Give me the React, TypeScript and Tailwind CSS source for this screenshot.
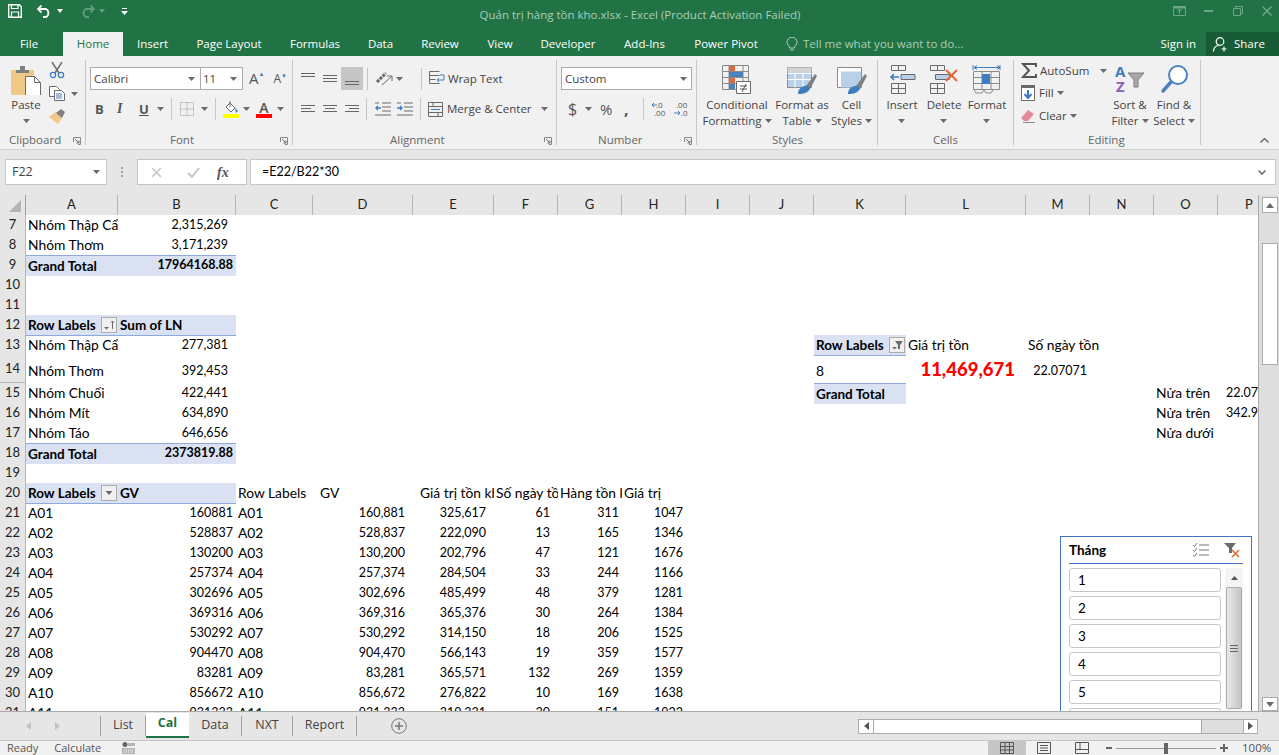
import type { ReactNode } from "react";

const rowGrid =
  "grid grid-cols-[26px_92px_118px_77px_100px_81px_64px_64px_64px_64px_64px_92px_120px_64px_64px_64px_40px]";

type Kind = "l" | "l7" | "p" | "r" | "a" | "head" | "total" | "totalr" | "big";
type Cell = { c: number; t: string; k?: Kind; btn?: "sort" | "drop" | "filter"; spill?: boolean };
type Row = { n: number; tall?: boolean; cells: Cell[] };

const kindClass: Record<Kind, string> = {
  l: "pl-[2px] text-left text-[13.8px]",
  l7: "pl-[7px] text-left text-[13.8px]",
  p: "pl-[8px] text-left text-[12.5px]",
  r: "pr-[3px] text-right text-[12.5px]",
  a: "pr-[8px] text-right text-[12.5px]",
  head: "pl-[2px] text-left font-bold bg-[#d9e1f2] border-b border-[#8ea9db]",
  total: "pl-[2px] text-left font-bold bg-[#d9e1f2] border-t border-[#8ea9db]",
  totalr: "pr-[3px] text-right font-bold text-[12.5px] bg-[#d9e1f2] border-t border-[#8ea9db]",
  big: "pr-[11px] pb-[3px] text-right font-black text-[#ff0000] text-[18.5px]",
};

const gv: [string, string, string, string, string, string, string][] = [
  ["A01", "160881", "160,881", "325,617", "61", "311", "1047"],
  ["A02", "528837", "528,837", "222,090", "13", "165", "1346"],
  ["A03", "130200", "130,200", "202,796", "47", "121", "1676"],
  ["A04", "257374", "257,374", "284,504", "33", "244", "1166"],
  ["A05", "302696", "302,696", "485,499", "48", "379", "1281"],
  ["A06", "369316", "369,316", "365,376", "30", "264", "1384"],
  ["A07", "530292", "530,292", "314,150", "18", "206", "1525"],
  ["A08", "904470", "904,470", "566,143", "19", "359", "1577"],
  ["A09", "83281", "83,281", "365,571", "132", "269", "1359"],
  ["A10", "856672", "856,672", "276,822", "10", "169", "1638"],
  ["A11", "931333", "931,333", "319,331", "30", "151", "1922"],
];

const lnRow = (n: number, name: string, val: string, extra: Cell[] = [], tall = false): Row => ({
  n,
  tall,
  cells: [{ c: 1, t: name, k: "l" }, { c: 2, t: val, k: "a" }, ...extra],
});

const rows: Row[] = [
  lnRow(7, "Nhóm Thập Cẩm", "2,315,269"),
  lnRow(8, "Nhóm Thơm", "3,171,239"),
  { n: 9, cells: [{ c: 1, t: "Grand Total", k: "total" }, { c: 2, t: "17964168.88", k: "totalr" }] },
  { n: 10, cells: [] },
  { n: 11, cells: [] },
  { n: 12, cells: [{ c: 1, t: "Row Labels", k: "head", btn: "sort" }, { c: 2, t: "Sum of LN", k: "head" }] },
  lnRow(13, "Nhóm Thập Cẩm", "277,381", [
    { c: 11, t: "Row Labels", k: "head", btn: "filter" },
    { c: 12, t: "Giá trị tồn", k: "l" },
    { c: 13, t: "Số ngày tồn", k: "l", spill: true },
  ]),
  lnRow(
    14,
    "Nhóm Thơm",
    "392,453",
    [
      { c: 11, t: "8", k: "l" },
      { c: 12, t: "11,469,671", k: "big" },
      { c: 13, t: "22.07071", k: "r" },
    ],
    true,
  ),
  lnRow(15, "Nhóm Chuối", "422,441", [
    { c: 11, t: "Grand Total", k: "total" },
    { c: 15, t: "Nửa trên", k: "l" },
    { c: 16, t: "22.07071", k: "p" },
  ]),
  lnRow(16, "Nhóm Mít", "634,890", [
    { c: 15, t: "Nửa trên", k: "l" },
    { c: 16, t: "342.9071", k: "p" },
  ]),
  lnRow(17, "Nhóm Táo", "646,656", [{ c: 15, t: "Nửa dưới", k: "l" }]),
  { n: 18, cells: [{ c: 1, t: "Grand Total", k: "total" }, { c: 2, t: "2373819.88", k: "totalr" }] },
  { n: 19, cells: [] },
  {
    n: 20,
    cells: [
      { c: 1, t: "Row Labels", k: "head", btn: "drop" },
      { c: 2, t: "GV", k: "head" },
      { c: 3, t: "Row Labels", k: "l" },
      { c: 4, t: "GV", k: "l7" },
      { c: 5, t: "Giá trị tồn kho", k: "l7" },
      { c: 6, t: "Số ngày tồn", k: "l" },
      { c: 7, t: "Hàng tồn kho", k: "l" },
      { c: 8, t: "Giá trị", k: "l" },
    ],
  },
  ...gv.map((g, i) => ({
    n: 21 + i,
    cells: [
      { c: 1, t: g[0], k: "l" as Kind },
      { c: 2, t: g[1], k: "r" as Kind },
      { c: 3, t: g[0], k: "l" as Kind },
      { c: 4, t: g[2], k: "a" as Kind },
      { c: 5, t: g[3], k: "a" as Kind },
      { c: 6, t: g[4], k: "a" as Kind },
      { c: 7, t: g[5], k: "r" as Kind },
      { c: 8, t: g[6], k: "r" as Kind },
    ],
  })),
];

const columns = ["A", "B", "C", "D", "E", "F", "G", "H", "I", "J", "K", "L", "M", "N", "O", "P"];
const tabs = [
  ["Insert", "w-[59px]"],
  ["Page Layout", "w-[94px]"],
  ["Formulas", "w-[78px]"],
  ["Data", "w-[53px]"],
  ["Review", "w-[66px]"],
  ["View", "w-[54px]"],
  ["Developer", "w-[82px]"],
  ["Add-Ins", "w-[71px]"],
  ["Power Pivot", "w-[92px]"],
];

function Caret({ className = "" }: { className?: string }) {
  return (
    <svg width="7" height="4" viewBox="0 0 7 4" className={`shrink-0 ${className}`}>
      <path d="M0 0h7L3.5 4z" fill="#6a6a6a" />
    </svg>
  );
}

function Launcher() {
  return (
    <svg width="8" height="8" viewBox="0 0 8 8" className="shrink-0">
      <path d="M.5 5V.5H7.5V7.5H5" fill="none" stroke="#8a8a8a" />
      <path d="M2 2l4 4M6 3.5V6H3.5" fill="none" stroke="#6a6a6a" />
    </svg>
  );
}

function Group({
  label,
  width,
  labelClass,
  children,
}: {
  label: string;
  width: string;
  labelClass: string;
  children: ReactNode;
}) {
  return (
    <div className={`relative flex h-[85px] flex-col border-r border-[#c6c6c6] ${width}`}>
      <div className="h-[74px] shrink-0">{children}</div>
      <div className={`flex h-[12px] shrink-0 items-center text-[11.5px] leading-none text-[#666666] ${labelClass}`}>
        {label}
      </div>
    </div>
  );
}

function AlignLines({ rows, className = "" }: { rows: [number, number, number][]; className?: string }) {
  return (
    <svg width="14" height="14" viewBox="0 0 14 14" className={`shrink-0 ${className}`}>
      {rows.map(([x, y, w]) => (
        <path key={y} d={`M${x} ${y + 0.5}h${w}`} stroke="#666666" />
      ))}
    </svg>
  );
}

function Sep({ className = "" }: { className?: string }) {
  return <div className={`h-[22px] w-px shrink-0 bg-[#c6c6c6] ${className}`} />;
}

function BigLabel({ one, two, caret = true }: { one: string; two?: string; caret?: boolean }) {
  return (
    <div className="flex flex-col items-center whitespace-nowrap text-[11.5px] leading-[16px] text-[#444444]">
      <span>{one}</span>
      <span className="flex items-center gap-[3px]">
        {two}
        {caret && <Caret className={two ? "" : "mt-[6px]"} />}
      </span>
    </div>
  );
}

function Clipboard() {
  return (
    <Group label="Clipboard" width="w-[86px]" labelClass="pl-[9px] gap-[14px]">
      <div className="flex pt-[4px]">
        <div className="ml-[7px] flex w-[38px] flex-col items-center">
          <svg width="32" height="31" viewBox="0 0 32 31">
            <path d="M1 6h23v26H1z" fill="#f0c987" />
            <path d="M6 6h13v3H6zM10 2h5v4h-5z" fill="#7f7f7f" />
            <path d="M15.5 12.5h9l6 6v13h-15z" fill="#ffffff" stroke="#6a6a6a" />
            <path d="M24.5 12.5v6h6" fill="none" stroke="#6a6a6a" />
          </svg>
          <span className="mt-[2px] text-[11.5px] leading-[16px] text-[#444444]">Paste</span>
          <Caret className="mt-[6px]" />
        </div>
        <div className="ml-[4px] flex flex-col">
          <svg width="16" height="17" viewBox="0 0 16 17" className="-mt-[2px]">
            <path d="M3 0l7 11M13 0L6 11" stroke="#6a6a6a" strokeWidth="1.4" />
            <circle cx="4" cy="13" r="2.6" fill="none" stroke="#3f7cbf" strokeWidth="1.3" />
            <circle cx="12" cy="13" r="2.6" fill="none" stroke="#3f7cbf" strokeWidth="1.3" />
          </svg>
          <div className="mt-[7px] flex items-center gap-[6px]">
            <svg width="16" height="15" viewBox="0 0 16 15">
              <path d="M.5.5h7l3 3v7H.5z" fill="#ffffff" stroke="#6a6a6a" />
              <path d="M5.5 4.5h7l3 3v7h-10z" fill="#ffffff" stroke="#6a6a6a" />
              <path d="M7 8h6M7 10h6M7 12h6" stroke="#3f7cbf" />
            </svg>
            <Caret />
          </div>
          <svg width="17" height="16" viewBox="0 0 17 16" className="mt-[7px]">
            <path d="M0 9l7-5 6 6-4 6z" fill="#f0c987" />
            <path d="M7 5l5-4 4 3-3 6z" fill="#7f7f7f" />
          </svg>
        </div>
      </div>
      <div className="absolute bottom-[0px] right-[4px]">
        <Launcher />
      </div>
    </Group>
  );
}

function FontGroup() {
  return (
    <Group label="Font" width="w-[207px]" labelClass="pl-[84px]">
      <div className="mt-[7px] flex h-[23px] items-center pl-[4px]">
        <div className="flex h-[23px] w-[111px] items-center justify-between border border-[#ababab] bg-white pl-[3px] pr-[5px] text-[11.5px] text-[#444444]">
          Calibri
          <Caret />
        </div>
        <div className="flex h-[23px] w-[42px] items-center justify-between border border-l-0 border-[#ababab] bg-white pl-[2px] pr-[5px] text-[11.5px] text-[#444444]">
          11
          <Caret />
        </div>
        <span className="ml-[6px] flex items-start text-[15px] leading-none text-[#555555]">
          A<span className="text-[6px] leading-none text-[#3f7cbf]">▲</span>
        </span>
        <span className="ml-[9px] flex items-start text-[12px] leading-none text-[#555555]">
          A<span className="text-[6px] leading-none text-[#3f7cbf]">▼</span>
        </span>
      </div>
      <div className="mt-[8px] flex h-[22px] items-center pl-[9px]">
        <span className="w-[22px] text-[13px] font-bold leading-none text-[#555555]">B</span>
        <span className="w-[22px] font-['Liberation_Serif',serif] text-[14px] font-bold italic leading-none text-[#555555]">I</span>
        <span className="w-[17px] text-[13px] font-bold leading-none text-[#555555] underline">U</span>
        <Caret className="ml-[1px]" />
        <Sep className="ml-[7px]" />
        <svg width="14" height="14" viewBox="0 0 14 14" className="ml-[8px]">
          <path d="M.5.5h13v13H.5zM7 .5v13M.5 7h13" fill="none" stroke="#999999" strokeDasharray="1 1" />
        </svg>
        <Caret className="ml-[7px]" />
        <Sep className="ml-[7px]" />
        <svg width="16" height="17" viewBox="0 0 16 17" className="ml-[7px]">
          <path d="M3 6l4-4 5 5-4 4z" fill="#ffffff" stroke="#6a6a6a" />
          <path d="M7 0v6" stroke="#6a6a6a" />
          <path d="M12 7l3 3-2 2z" fill="#3f7cbf" />
          <path d="M0 13h16v4H0z" fill="#ffff00" />
        </svg>
        <Caret className="ml-[4px]" />
        <div className="ml-[6px] flex w-[16px] flex-col items-center">
          <span className="text-[14px] font-semibold leading-[13px] text-[#555555]">A</span>
          <div className="h-[4px] w-[16px] bg-[#ff0000]" />
        </div>
        <Caret className="ml-[5px]" />
      </div>
      <div className="absolute bottom-[0px] right-[4px]">
        <Launcher />
      </div>
    </Group>
  );
}

function AlignmentGroup() {
  const lines = (a: number, b: number, c: number): [number, number, number][] => [
    [0, a, 14],
    [2, b, 10],
    [0, c, 14],
  ];
  return (
    <Group label="Alignment" width="w-[264px]" labelClass="pl-[97px]">
      <div className="mt-[7px] flex h-[23px] items-center pl-[8px]">
        <AlignLines rows={[[0, 1, 14], [0, 4, 14]]} />
        <AlignLines rows={[[0, 3, 14], [0, 6, 14], [0, 9, 14]]} className="ml-[8px]" />
        <div className="ml-[4px] flex h-[23px] w-[22px] items-center justify-center bg-[#c6c6c6]">
          <AlignLines rows={[[0, 9, 14], [0, 12, 14]]} />
        </div>
        <Sep className="ml-[4px]" />
        <svg width="18" height="16" viewBox="0 0 18 16" className="ml-[7px]">
          <path d="M2 11L11 2" stroke="#6a6a6a" strokeWidth="3" strokeDasharray="3 1" />
          <path d="M7 14L16 6M12 5h5v5" fill="none" stroke="#6a6a6a" />
        </svg>
        <Caret className="ml-[3px]" />
        <Sep className="ml-[18px]" />
        <svg width="16" height="15" viewBox="0 0 16 15" className="ml-[7px]">
          <path d="M.5.5h10M.5 4.5h10M.5 8.5h6M.5 12.5h10" stroke="#6a6a6a" />
          <path d="M.5 .5v12" stroke="#6a6a6a" />
          <path d="M11 4h4v5H9M10 7l-2 2 2 2" fill="none" stroke="#3f7cbf" />
        </svg>
        <span className="ml-[3px] text-[11.5px] text-[#444444]">Wrap Text</span>
      </div>
      <div className="mt-[8px] flex h-[22px] items-center pl-[8px]">
        <AlignLines rows={lines(3, 6, 9).map(([, y, w], i) => [0, y, i === 1 ? 10 : w])} />
        <AlignLines rows={lines(3, 6, 9)} className="ml-[8px]" />
        <AlignLines rows={lines(3, 6, 9).map(([, y, w], i) => [i === 1 ? 4 : 0, y, i === 1 ? 10 : w])} className="ml-[8px]" />
        <Sep className="ml-[7px]" />
        <svg width="16" height="14" viewBox="0 0 16 14" className="ml-[8px]">
          <path d="M7 1h9M7 5h9M7 9h9M0 13h16M0 1h4" stroke="#6a6a6a" />
          <path d="M6 6H1M3 4L1 6l2 2" fill="none" stroke="#3f7cbf" strokeWidth="1.4" />
        </svg>
        <svg width="16" height="14" viewBox="0 0 16 14" className="ml-[6px]">
          <path d="M7 1h9M7 5h9M7 9h9M0 13h16M0 1h4" stroke="#6a6a6a" />
          <path d="M0 6h5M3 4l2 2-2 2" fill="none" stroke="#3f7cbf" strokeWidth="1.4" />
        </svg>
        <Sep className="ml-[7px]" />
        <svg width="15" height="15" viewBox="0 0 15 15" className="ml-[7px]">
          <path d="M.5.5h14v14H.5zM.5 4.5h14M.5 10.5h14M5 .5v4M10 10.5v4" fill="none" stroke="#6a6a6a" />
          <path d="M3 7.5h9" stroke="#3f7cbf" />
        </svg>
        <span className="ml-[4px] text-[11.5px] text-[#444444]">Merge &amp; Center</span>
        <Caret className="ml-[9px]" />
      </div>
      <div className="absolute bottom-[0px] right-[4px]">
        <Launcher />
      </div>
    </Group>
  );
}

function NumberGroup() {
  return (
    <Group label="Number" width="w-[140px]" labelClass="pl-[41px]">
      <div className="mt-[7px] flex h-[23px] items-center pl-[4px]">
        <div className="flex h-[23px] w-[131px] items-center justify-between border border-[#ababab] bg-white pl-[3px] pr-[4px] text-[11.5px] text-[#444444]">
          Custom
          <Caret />
        </div>
      </div>
      <div className="mt-[8px] flex h-[22px] items-center pl-[11px] text-[#555555]">
        <span className="w-[17px] text-[16px] leading-none">$</span>
        <Caret />
        <span className="ml-[8px] w-[17px] text-[15px] leading-none">%</span>
        <span className="ml-[7px] w-[16px] text-[16px] font-bold leading-none">,</span>
        <Sep className="ml-[3px]" />
        <svg width="16" height="16" viewBox="0 0 16 16" className="ml-[7px]">
          <text x="5" y="7" fontSize="8" fill="#555555" fontFamily="Open Sans">.0</text>
          <text x="3" y="15" fontSize="8" fill="#555555" fontFamily="Open Sans">.00</text>
          <path d="M6 4H1M3 2L1 4l2 2" fill="none" stroke="#3f7cbf" />
        </svg>
        <svg width="16" height="16" viewBox="0 0 16 16" className="ml-[6px]">
          <text x="3" y="7" fontSize="8" fill="#555555" fontFamily="Open Sans">.00</text>
          <text x="8" y="15" fontSize="8" fill="#555555" fontFamily="Open Sans">.0</text>
          <path d="M1 12h6M5 10l2 2-2 2" fill="none" stroke="#3f7cbf" />
        </svg>
      </div>
      <div className="absolute bottom-[0px] right-[4px]">
        <Launcher />
      </div>
    </Group>
  );
}

function StylesGroup() {
  return (
    <Group label="Styles" width="w-[181px]" labelClass="pl-[75px]">
      <div className="flex pl-[6px] pt-[4px]">
        <div className="flex w-[68px] flex-col items-center">
          <svg width="32" height="31" viewBox="0 0 32 31">
            <path d="M1.5 1.5h26v24h-26zM1.5 7.5h26M1.5 13.5h26M1.5 19.5h26M8 1.5v24M22 1.5v24" fill="none" stroke="#8a8a8a" />
            <path d="M8 2h6v5H8zM8 14h6v5H8z" fill="#e0693a" />
            <path d="M8 8h14v5H8zM8 20h6v5H8z" fill="#4a82bd" />
            <path d="M15.5 17.5h14v12h-14z" fill="#ffffff" stroke="#6a6a6a" />
            <path d="M19 22h7M19 25h7M25 20l-4 8" stroke="#555555" fill="none" />
          </svg>
          <div className="mt-[2px]"><BigLabel one="Conditional" two="Formatting" /></div>
        </div>
        <div className="flex w-[62px] flex-col items-center">
          <svg width="32" height="31" viewBox="0 0 32 31">
            <path d="M1.5 3.5h24v20h-24z" fill="#b9d0ea" stroke="#8a8a8a" />
            <path d="M1.5 9.5h24M1.5 15.5h24M9 3.5v20M17 3.5v20" stroke="#ffffff" />
            <path d="M1.5 3.5h24v5h-24z" fill="#d4d4d4" />
            <path d="M20 22L29 10l2 2-7 13z" fill="#7f7f7f" />
            <path d="M12 30c0-5 4-9 10-8l2 3c-2 3-5 5-12 5z" fill="#3f7cbf" />
          </svg>
          <div className="mt-[2px]"><BigLabel one="Format as" two="Table" /></div>
        </div>
        <div className="flex w-[37px] flex-col items-center">
          <svg width="32" height="31" viewBox="0 0 32 31">
            <path d="M1.5 3.5h24v20h-24z" fill="#ffffff" stroke="#8a8a8a" />
            <path d="M5 7.5h20v16H5z" fill="#b9d0ea" />
            <path d="M20 22L29 10l2 2-7 13z" fill="#7f7f7f" />
            <path d="M12 30c0-5 4-9 10-8l2 3c-2 3-5 5-12 5z" fill="#3f7cbf" />
          </svg>
          <div className="mt-[2px]"><BigLabel one="Cell" two="Styles" /></div>
        </div>
      </div>
    </Group>
  );
}

function CellsGroup() {
  return (
    <Group label="Cells" width="w-[136px]" labelClass="pl-[55px]">
      <div className="flex pl-[3px] pt-[4px]">
        <div className="flex w-[42px] flex-col items-center">
          <svg width="28" height="31" viewBox="0 0 28 31">
            <path d="M3.5 1.5h14v5h-14zM10.5 1.5v5M3.5 19.5h14v10h-14zM3.5 24.5h14M10.5 19.5v10" fill="none" stroke="#6a6a6a" />
            <path d="M13 10.5h14v5H13z" fill="#b9d0ea" stroke="#6a6a6a" />
            <path d="M11 13H3M6 10l-3 3 3 3" fill="none" stroke="#3f7cbf" strokeWidth="1.6" />
          </svg>
          <div className="mt-[2px]"><BigLabel one="Insert" /></div>
        </div>
        <div className="flex w-[42px] flex-col items-center">
          <svg width="32" height="31" viewBox="0 0 32 31">
            <path d="M2.5 1.5h14v5h-14zM9.5 1.5v5M2.5 19.5h14v10h-14zM2.5 24.5h14M9.5 19.5v10" fill="none" stroke="#6a6a6a" />
            <path d="M7.5 10.5h14v5h-14z" fill="#b9d0ea" stroke="#6a6a6a" />
            <path d="M18 6l11 11M29 6L18 17" stroke="#e0693a" strokeWidth="2" />
          </svg>
          <div className="mt-[2px]"><BigLabel one="Delete" /></div>
        </div>
        <div className="flex w-[44px] flex-col items-center">
          <svg width="30" height="31" viewBox="0 0 30 31">
            <path d="M1 1v5M28 1v5M2 3.5h26M2 3.5l3-2M2 3.5l3 2M28 3.5l-3-2M28 3.5l-3 2" fill="none" stroke="#3f7cbf" />
            <path d="M1.5 7.5h26v18h-26zM1.5 13.5h26M1.5 19.5h26M10 7.5v18M19 7.5v18" fill="none" stroke="#8a8a8a" />
            <path d="M10 10h8v10h-8z" fill="#3f7cbf" />
            <path d="M2 26l2 3h6l2-3M12 26l2 3h5l2-3" fill="none" stroke="#8a8a8a" />
          </svg>
          <div className="mt-[2px]"><BigLabel one="Format" /></div>
        </div>
      </div>
    </Group>
  );
}

function EditingGroup() {
  return (
    <Group label="Editing" width="w-[187px]" labelClass="pl-[74px]">
      <div className="flex pt-[2px]">
        <div className="ml-[7px] flex w-[87px] flex-col gap-[5.5px] whitespace-nowrap text-[11.5px] text-[#444444]">
          <div className="flex h-[17px] items-center">
            <svg width="16" height="15" viewBox="0 0 16 15" className="shrink-0">
              <path d="M15 4V1H2l6 6.5L2 14h13v-3" fill="none" stroke="#555555" strokeWidth="2" />
            </svg>
            <span className="ml-[3px]">AutoSum</span>
            <Caret className="ml-[11px]" />
          </div>
          <div className="flex h-[17px] items-center">
            <svg width="15" height="16" viewBox="0 0 15 16" className="shrink-0">
              <path d="M.5 1.5h13v14H.5z" fill="#ffffff" stroke="#6a6a6a" />
              <path d="M0 0h14v3H0z" fill="#6a6a6a" />
              <path d="M7 5v8M3.5 9L7 13l3.5-4" fill="none" stroke="#3f7cbf" strokeWidth="2" />
            </svg>
            <span className="ml-[3px]">Fill</span>
            <Caret className="ml-[3px]" />
          </div>
          <div className="flex h-[17px] items-center">
            <svg width="15" height="14" viewBox="0 0 15 14" className="shrink-0">
              <path d="M0 9l7-8 6 4-6 7H3z" fill="#e58a9a" />
              <path d="M2 13.5h12" stroke="#8a8a8a" />
            </svg>
            <span className="ml-[3px]">Clear</span>
            <Caret className="ml-[3px]" />
          </div>
        </div>
        <div className="flex w-[44px] flex-col items-center">
          <svg width="31" height="30" viewBox="0 0 31 30" className="mt-[2px]">
            <text x="0" y="13" fontSize="15" fontWeight="700" fill="#3f7cbf" fontFamily="Open Sans">A</text>
            <text x="1" y="28" fontSize="15" fontWeight="700" fill="#8f5fb5" fontFamily="Open Sans">Z</text>
            <path d="M13 9h16l-6 7v7h-4v-7z" fill="#a8a8a8" stroke="#7f7f7f" />
          </svg>
          <div className="mt-[3px]"><BigLabel one="Sort &" two="Filter" /></div>
        </div>
        <div className="flex w-[44px] flex-col items-center">
          <svg width="29" height="30" viewBox="0 0 29 30" className="mt-[2px]">
            <circle cx="18" cy="11" r="9" fill="#ffffff" stroke="#4a82bd" strokeWidth="2" />
            <path d="M11 18L3 27" stroke="#4a82bd" strokeWidth="3.4" strokeLinecap="round" />
          </svg>
          <div className="mt-[3px]"><BigLabel one="Find &" two="Select" /></div>
        </div>
      </div>
    </Group>
  );
}

function HeaderButton({ kind }: { kind: "sort" | "drop" | "filter" }) {
  return (
    <span className="mr-[1px] flex h-[16px] w-[16px] shrink-0 items-center justify-center border border-[#ababab] bg-[#f0f0f0]">
      <svg width="12" height="10" viewBox="0 0 12 10">
        {kind === "filter" && <path d="M4 1h8L9 5v4H7V5z" fill="#6a6a6a" />}
        {kind === "sort" && <path d="M9.5 1v8M8 2.500l1.500-1.500 1.500 1.500" fill="none" stroke="#6a6a6a" />}
        {kind === "drop" ? (
          <path d="M2.500 3h7L6 7z" fill="#6a6a6a" />
        ) : (
          <path d="M1 7h5L3.500 9.500z" fill="#6a6a6a" />
        )}
      </svg>
    </span>
  );
}

function SheetRow({ row }: { row: Row }) {
  const byCol = new Map(row.cells.map((c) => [c.c, c]));
  return (
    <div className={`${rowGrid} ${row.tall ? "h-[28px]" : "h-5"}`}>
      <div className="flex items-center justify-center border-b border-r border-[#b5b5b5] bg-[#e6e6e6] text-[13px] text-[#222222]">
        {row.n}
      </div>
      {columns.map((_, i) => {
        const cell = byCol.get(i + 1);
        if (!cell) return <div key={i} />;
        const k = cell.k ?? "l";
        const leftAligned = k === "l" || k === "l7" || k === "p" || k === "head" || k === "total";
        return (
          <div
            key={i}
            className={`flex min-w-0 items-center whitespace-nowrap ${cell.spill ? "overflow-visible" : "overflow-hidden"} ${
              row.tall ? "pt-[4px]" : ""
            } ${cell.btn ? "justify-between" : ""} ${kindClass[k]}`}
          >
            <span className={leftAligned ? "" : "ml-auto"}>{cell.t}</span>
            {cell.btn && <HeaderButton kind={cell.btn} />}
          </div>
        );
      })}
    </div>
  );
}

function Slicer() {
  return (
    <div className="absolute left-[1060px] top-[321px] w-[192px] border border-b-0 border-[#4472c4] bg-white px-[8px] pb-[40px]">
      <div className="flex h-[27px] items-center justify-between border-b border-[#4472c4]">
        <span className="text-[13.5px] font-bold">Tháng</span>
        <div className="flex items-center gap-[15px] pr-[2px]">
          <svg width="16" height="14" viewBox="0 0 16 14">
            <path d="M0 2l1.500 1.500L4 0M0 7l1.500 1.500L4 5M0 12l1.500 1.500L4 10" fill="none" stroke="#777777" />
            <path d="M6 2h10M6 7h10M6 12h10" stroke="#777777" />
          </svg>
          <svg width="17" height="16" viewBox="0 0 17 16">
            <path d="M0 1h12L8 6v5H5V6z" fill="#6a6a6a" />
            <path d="M8 8l7 7M15 8l-7 7" stroke="#e0693a" strokeWidth="1.5" />
          </svg>
        </div>
      </div>
      <div className="mt-[4px] flex gap-[4px]">
        <div className="flex w-[152px] flex-col gap-[4px]">
          {["1", "2", "3", "4", "5", ""].map((t, i) => (
            <div key={i} className="flex h-[24px] items-center rounded-[3px] border border-[#c6c6c6] pl-[8px] text-[13.5px]">
              {t}
            </div>
          ))}
        </div>
        <div className="flex h-[160px] w-[18px] flex-col bg-[#f4f4f4]">
          <div className="flex h-[19px] items-center justify-center">
            <svg width="7" height="4" viewBox="0 0 7 4"><path d="M0 4h7L3.500 0z" fill="#555555" /></svg>
          </div>
          <div className="mx-[1px] flex h-[122px] items-center justify-center rounded-[2px] border border-[#ababab] bg-gradient-to-r from-[#e8e8e8] to-[#c4c4c8]">
            <svg width="8" height="7" viewBox="0 0 8 7"><path d="M0 .5h8M0 3.500h8M0 6.500h8" stroke="#666666" /></svg>
          </div>
        </div>
      </div>
    </div>
  );
}

function Sheet() {
  return (
    <div className="flex h-[516px]">
      <div className="flex w-[1258px] flex-col">
        <div className={`${rowGrid} h-[20px] bg-[#e6e6e6] text-[13px] text-[#222222]`}>
          <div className="flex items-end justify-end border-b border-r border-[#9f9f9f] pb-[3px] pr-[4px]">
            <svg width="12" height="12" viewBox="0 0 12 12"><path d="M12 0v12H0z" fill="#b4b4b4" /></svg>
          </div>
          {columns.map((c) => (
            <div
              key={c}
              className={`flex items-center border-b border-b-[#9f9f9f] ${
                c === "P" ? "justify-start pl-[27px]" : "justify-center border-r border-r-[#b5b5b5]"
              }`}
            >
              {c}
            </div>
          ))}
        </div>
        <div className="relative h-[496px] overflow-hidden bg-white text-[13.5px] text-black">
          {rows.map((r) => (
            <SheetRow key={r.n} row={r} />
          ))}
          <Slicer />
        </div>
      </div>
      <div className="flex w-[21px] flex-col border-l border-[#ababab] bg-[#dedede] pl-[3px] pr-[1px] pt-[2px]">
        <div className="flex h-[16px] w-[16px] items-center justify-center border border-[#ababab] bg-white">
          <svg width="8" height="5" viewBox="0 0 8 5"><path d="M0 5h8L4 0z" fill="#6a6a6a" /></svg>
        </div>
        <div className="mt-[30px] h-[122px] w-[16px] border border-[#ababab] bg-white" />
        <div className="mt-auto flex h-[14px] w-[16px] items-center justify-center border border-[#ababab] bg-white">
          <svg width="8" height="5" viewBox="0 0 8 5"><path d="M0 0h8L4 5z" fill="#6a6a6a" /></svg>
        </div>
      </div>
    </div>
  );
}

function SheetTabs() {
  return (
    <div className="flex h-[29px] items-center border-t border-[#ababab] bg-[#e6e6e6] text-[12.5px] text-[#444444]">
      <div className="flex w-[100px] items-center pl-[26px]">
        <svg width="5" height="8" viewBox="0 0 5 8"><path d="M5 0v8L0 4z" fill="#c0c0c0" /></svg>
        <svg width="5" height="8" viewBox="0 0 5 8" className="ml-[24px]"><path d="M0 0v8l5-4z" fill="#c0c0c0" /></svg>
      </div>
      <div className="flex h-[20px] w-[46px] items-center justify-center border-x border-[#9f9f9f] pb-[2px]">List</div>
      <div className="-mt-[1px] flex h-[25px] w-[43px] items-center justify-center border-b-2 border-[#217346] bg-white pb-[2px] font-bold text-[#217346]">
        Cal
      </div>
      <div className="flex h-[20px] w-[53px] items-center justify-center border-r border-[#9f9f9f] pb-[2px]">Data</div>
      <div className="flex h-[20px] w-[51px] items-center justify-center border-r border-[#9f9f9f] pb-[2px]">NXT</div>
      <div className="flex h-[20px] w-[64px] items-center justify-center border-r border-[#9f9f9f] pb-[2px]">Report</div>
      <svg width="16" height="16" viewBox="0 0 16 16" className="ml-[34px]">
        <circle cx="8" cy="8" r="7.300" fill="none" stroke="#777777" />
        <path d="M4 8h8M8 4v8" stroke="#777777" strokeWidth="1.500" />
      </svg>
      <div className="ml-auto mr-[21px] flex h-[15px] w-[400px] border border-[#ababab] bg-[#dedede]">
        <div className="flex w-[14px] items-center justify-center bg-white">
          <svg width="5" height="8" viewBox="0 0 5 8"><path d="M5 0v8L0 4z" fill="#555555" /></svg>
        </div>
        <div className="w-[329px] border-x border-[#ababab] bg-white" />
        <div className="ml-auto flex w-[14px] items-center justify-center border-l border-[#ababab] bg-white">
          <svg width="5" height="8" viewBox="0 0 5 8"><path d="M0 0v8l5-4z" fill="#555555" /></svg>
        </div>
      </div>
    </div>
  );
}

function StatusBar() {
  return (
    <div className="flex h-[15px] items-center border-t border-[#c6c6c6] bg-[#f1f1f1] text-[11px] text-[#555555]">
      <span className="ml-[7px]">Ready</span>
      <span className="ml-[16px]">Calculate</span>
      <svg width="13" height="12" viewBox="0 0 13 12" className="ml-[21px]">
        <circle cx="3" cy="2.500" r="2.500" fill="#666666" />
        <path d="M6 1h7v3H6zM0 6h13v6H0z" fill="#b5b5b5" />
        <path d="M2 8h9M2 10h9" stroke="#ffffff" strokeDasharray="1 1" />
      </svg>
      <div className="ml-auto flex h-[15px] w-[38px] items-center justify-center bg-[#c6c6c6]">
        <svg width="14" height="12" viewBox="0 0 14 12">
          <path d="M.5.5h13v11H.5zM.5 4.500h13M.5 8h13M5 .5v11M9.500 .5v11" fill="none" stroke="#555555" />
        </svg>
      </div>
      <svg width="14" height="12" viewBox="0 0 14 12" className="ml-[11px]">
        <path d="M.5.5h13v11H.5zM3 3.500h8M3 6h8M3 8.500h8" fill="none" stroke="#555555" />
      </svg>
      <svg width="14" height="12" viewBox="0 0 14 12" className="ml-[24px]">
        <path d="M.5.5h13v11H.5zM.5 7.500h13M5 .5v7M5 7.500" fill="none" stroke="#555555" />
      </svg>
      <div className="ml-[17px] h-[2px] w-[6px] bg-[#666666]" />
      <div className="ml-[4px] flex h-[11px] w-[100px] items-center justify-center bg-[linear-gradient(#0000_5px,#999999_5px,#999999_6px,#0000_6px)]">
        <div className="h-[11px] w-[4px] bg-[#666666]" />
      </div>
      <svg width="8" height="8" viewBox="0 0 8 8" className="ml-[4px]"><path d="M0 4h8M4 0v8" stroke="#666666" strokeWidth="2" /></svg>
      <span className="ml-[14px] mr-[8px] w-[29px] text-[11.5px]">100%</span>
    </div>
  );
}

export default function App() {
  return (
    <div className="h-[755px] w-[1279px] overflow-hidden bg-[#e6e6e6] font-['Lato',sans-serif]">
      <div className="font-['Open_Sans',sans-serif]">
        <div className="flex h-[32px] items-center bg-[#217346]">
          <div className="flex flex-1 items-center pb-[10px] pl-[8px]">
            <svg width="14" height="14" viewBox="0 0 14 14">
              <path d="M.7.7h10.500l2.100 2.100v10.500H.7z" fill="none" stroke="#ffffff" strokeWidth="1.400" />
              <path d="M3.500 1v3.500h6.500V1M3.500 13V8h7v5" fill="none" stroke="#ffffff" strokeWidth="1.200" />
            </svg>
            <svg width="15" height="13" viewBox="0 0 15 13" className="ml-[15px]">
              <path d="M1 4h8a4.500 4.500 0 0 1 0 8H6M4.500 .5L1 4l3.500 3.500" fill="none" stroke="#ffffff" strokeWidth="1.800" />
            </svg>
            <svg width="6" height="4" viewBox="0 0 6 4" className="ml-[5px]"><path d="M0 0h6L3 4z" fill="#ffffff" /></svg>
            <svg width="15" height="13" viewBox="0 0 15 13" className="ml-[17px]">
              <path d="M14 4H6a4.500 4.500 0 0 0 0 8h3M10.500 .5L14 4l-3.500 3.500" fill="none" stroke="#5f9c7a" strokeWidth="1.800" />
            </svg>
            <svg width="6" height="4" viewBox="0 0 6 4" className="ml-[4px]"><path d="M0 0h6L3 4z" fill="#5f9c7a" /></svg>
            <svg width="7" height="7" viewBox="0 0 7 7" className="ml-[16px]">
              <path d="M1 .5h5" stroke="#ffffff" />
              <path d="M0 3h7L3.500 7z" fill="#ffffff" />
            </svg>
          </div>
          <div className="whitespace-nowrap pb-[3px] text-[11.5px] text-[#a9cdb8]">
            Quản trị hàng tồn kho.xlsx - Excel (Product Activation Failed)
          </div>
          <div className="flex flex-1 items-center justify-end pb-[11px] pr-[7px]">
            <svg width="14" height="10" viewBox="0 0 14 10">
              <path d="M.5.5h12v9H.5z" fill="none" stroke="#6ea487" />
              <path d="M6.500 8V3M4.500 5l2-2 2 2" fill="none" stroke="#6ea487" />
              <path d="M.5 1.500h12" stroke="#6ea487" strokeWidth="2" />
            </svg>
            <div className="ml-[17px] mt-[1px] h-[2px] w-[9px] bg-[#6ea487]" />
            <svg width="10" height="10" viewBox="0 0 10 10" className="ml-[20px]">
              <path d="M.5 2.500h7v7h-7zM2.500 2.500v-2h7v7h-2" fill="none" stroke="#6ea487" />
            </svg>
            <svg width="10" height="10" viewBox="0 0 10 10" className="ml-[19px]">
              <path d="M.5.5l9 9M9.500 .5l-9 9" stroke="#6ea487" strokeWidth="1.500" />
            </svg>
          </div>
        </div>

        <div className="flex h-[24px] items-center bg-[#217346] text-[11.5px] text-white">
          <div className="flex h-full w-[63px] items-center justify-center pr-[5px]">File</div>
          <div className="flex h-full w-[60px] items-center justify-center bg-[#f1f1f1] text-[#217346]">Home</div>
          {tabs.map(([t, w]) => (
            <div key={t} className={`flex h-full items-center justify-center ${w}`}>
              {t}
            </div>
          ))}
          <svg width="12" height="14" viewBox="0 0 12 14" className="ml-[14px]">
            <path d="M3.500 9.500a5 5 0 1 1 5 0V11h-5zM4 13h4" fill="none" stroke="#a9cdb8" />
          </svg>
          <span className="ml-[5px] text-[#a9cdb8]">Tell me what you want to do...</span>
          <span className="ml-auto">Sign in</span>
          <div className="ml-[10px] flex h-full w-[73px] items-center bg-[#185c37] pl-[7px]">
            <svg width="16" height="15" viewBox="0 0 16 15">
              <circle cx="7" cy="4.500" r="3.800" fill="none" stroke="#ffffff" strokeWidth="1.200" />
              <path d="M.5 14.500c0-3.500 2-5.500 5-6M11 9.500v5M8.500 12h5" fill="none" stroke="#ffffff" strokeWidth="1.200" />
            </svg>
            <span className="ml-[5px]">Share</span>
          </div>
        </div>

        <div className="relative flex h-[94px] items-start border-b border-[#d2d2d2] bg-[#f1f1f1] pt-[4px]">
          <Clipboard />
          <FontGroup />
          <AlignmentGroup />
          <NumberGroup />
          <StylesGroup />
          <CellsGroup />
          <EditingGroup />
          <svg width="9" height="5" viewBox="0 0 9 5" className="absolute bottom-[6px] right-[10px]">
            <path d="M.5 4.500l4-4 4 4" fill="none" stroke="#666666" strokeWidth="1.400" />
          </svg>
        </div>

        <div className="flex h-[45px] items-start bg-[#e6e6e6] pt-[9px] text-[12.5px] text-[#444444]">
          <div className="ml-[5px] flex h-[26px] w-[102px] items-center justify-between border border-[#c6c6c6] bg-white pl-[6px] pr-[6px]">
            F22
            <Caret />
          </div>
          <div className="flex h-[26px] w-[30px] flex-col items-center justify-center gap-[2px]">
            <div className="h-[2px] w-[2px] bg-[#9f9f9f]" />
            <div className="h-[2px] w-[2px] bg-[#9f9f9f]" />
            <div className="h-[2px] w-[2px] bg-[#9f9f9f]" />
          </div>
          <div className="flex h-[26px] w-[110px] items-center border border-[#c6c6c6] bg-white pl-[13px]">
            <svg width="11" height="11" viewBox="0 0 11 11"><path d="M1 1l9 9M10 1l-9 9" stroke="#c6c6c6" strokeWidth="1.600" /></svg>
            <svg width="13" height="11" viewBox="0 0 13 11" className="ml-[25px]"><path d="M1 6l4 4 7-9" fill="none" stroke="#c6c6c6" strokeWidth="2" /></svg>
            <span className="ml-[17px] font-['Liberation_Serif',serif] text-[14px] font-bold italic text-[#555555]">fx</span>
          </div>
          <div className="ml-[3px] flex h-[26px] w-[1026px] items-center justify-between border border-[#c6c6c6] bg-white pl-[11px] pr-[9px] font-['Lato',sans-serif] text-[12.5px] text-black">
            =E22/B22*30
            <svg width="8" height="5" viewBox="0 0 8 5"><path d="M.5.5L4 4 7.500 .5" fill="none" stroke="#666666" strokeWidth="1.500" /></svg>
          </div>
        </div>
      </div>

      <Sheet />
      <div className="font-['Open_Sans',sans-serif]">
        <SheetTabs />
        <StatusBar />
      </div>
    </div>
  );
}
